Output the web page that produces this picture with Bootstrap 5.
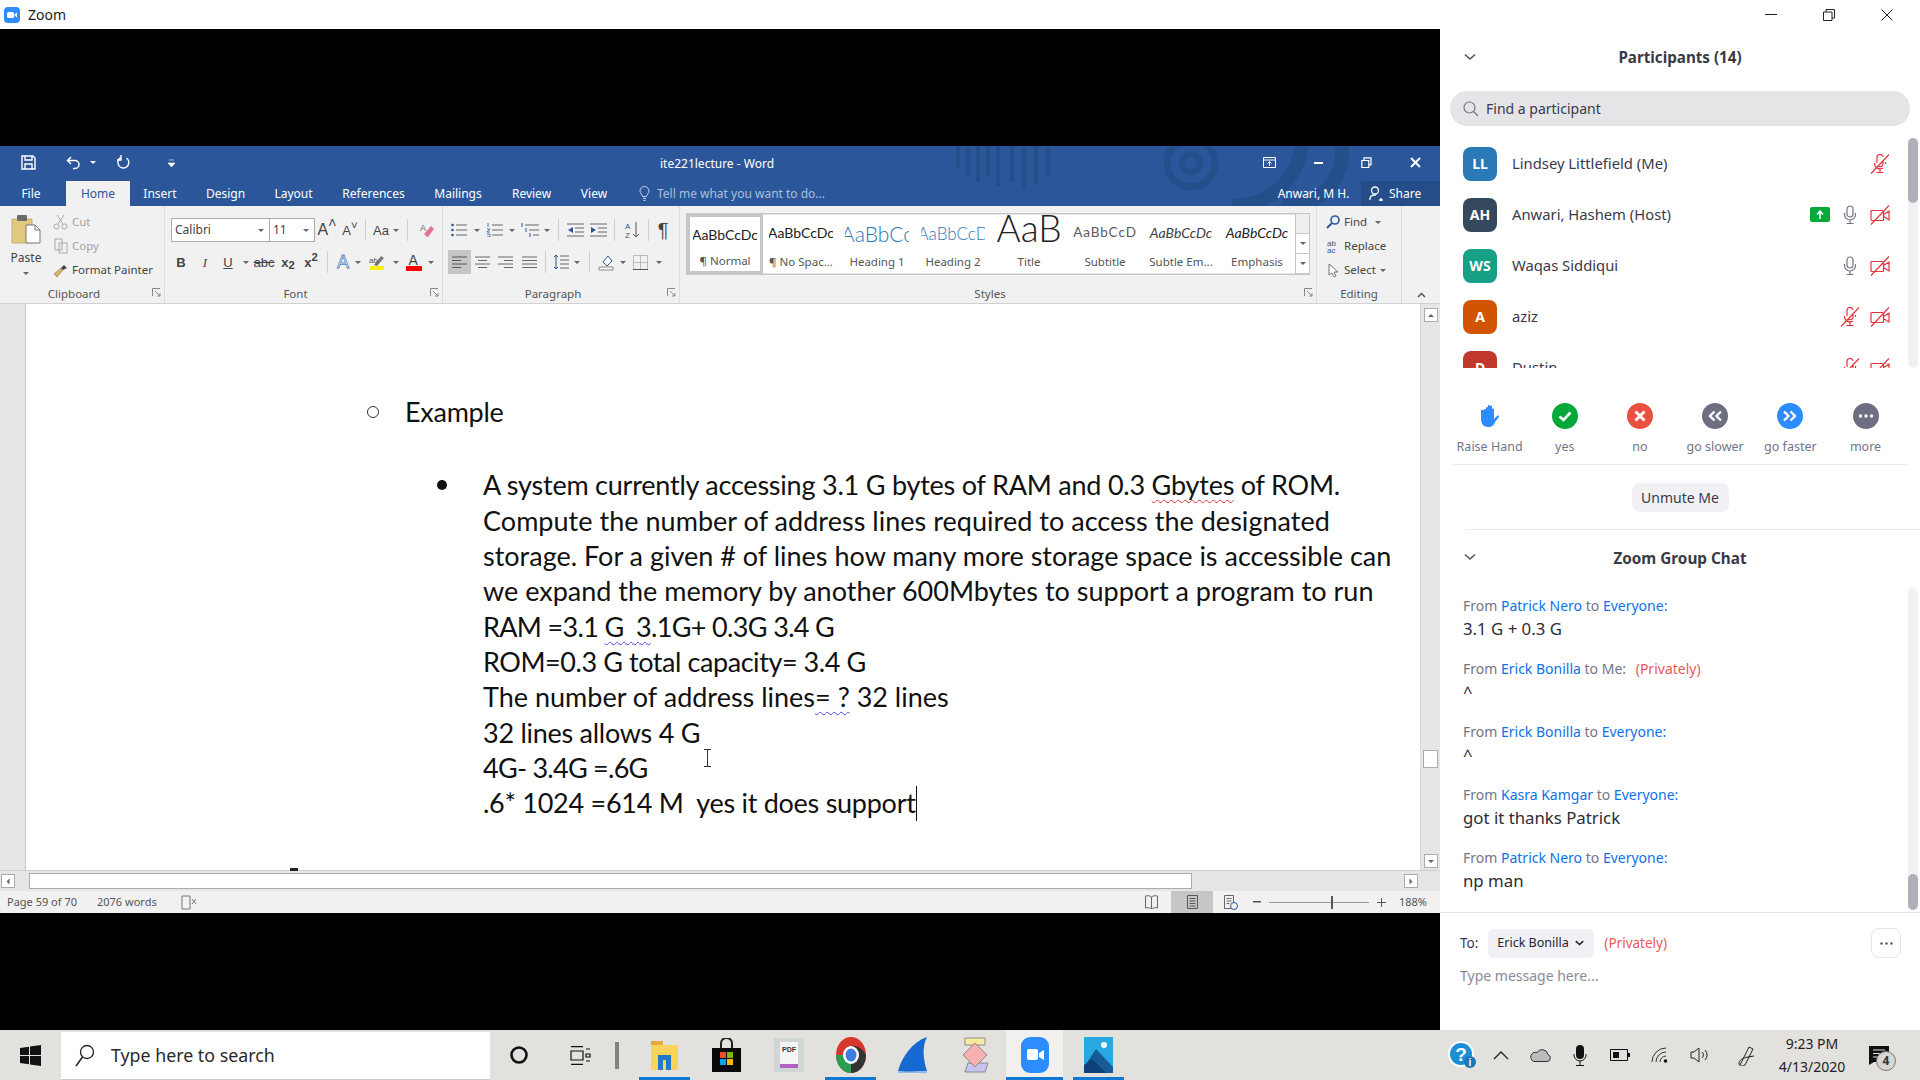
<!DOCTYPE html>
<html lang="en"><head><meta charset="utf-8"><title>Zoom</title>
<link href="https://cdn.jsdelivr.net/npm/bootstrap@5.3.0/dist/css/bootstrap.min.css" rel="stylesheet">
<style>
html,body{margin:0;width:1920px;height:1080px;overflow:hidden;background:#000;font-family:"Noto Sans",sans-serif}
svg{display:block;flex:none}
.shell{height:1030px}
.leftcol{width:1440px}
.apptitle{height:29px;background:#fff;padding-left:4px;gap:8px;font-size:14px;color:#222}
.blk{height:117px;background:#000}
.word{height:767px;background:#f1f1f1;overflow:hidden}
.wdhead{height:60px;background:#2b579a;position:relative;color:#fff;font-size:12px}
.deco{position:absolute;left:942px;top:0}
.wdtitle{height:33px;display:grid;grid-template-columns:56px 34px 6px 54px 42px 1050px 54px 44px 52px 46px;align-items:center;justify-items:center;position:relative}
.wdtitle>div.ttl{padding-top:3px}
.wdtabs{height:25px;margin-top:2px;display:grid;grid-template-columns:66px 64px 60px 71px 65px 95px 74px 73px 52px 659px 82px 79px;align-items:center;justify-items:center;position:relative}
.wdtabs>div{white-space:nowrap}
.filet{padding-right:4px}
.anw{padding-right:13px}
.tabon{background:#f1f1f1;color:#2b579a;justify-self:stretch;height:25px;line-height:25px;text-align:center}
.tell{justify-self:start;padding-left:19px;color:#a9bfdd;gap:7px}
.sharebox{justify-self:stretch;height:25px;background:#254d8a;gap:6px;padding-left:8px}
.ribbon{height:98px;background:#f1f1f1;border-bottom:1px solid #d2d2d2;color:#444;font-size:11.5px;line-height:1}
.grp{height:97px;border-right:1px solid #dcdcdc;margin-top:0;padding-top:4px;flex:none;display:flex;flex-direction:column}
.grpbody{height:72px}
.g1{width:165px}.g2{width:278px}.g3{width:237px}.g4{width:637px}.g5{width:85px}
.lbl{height:21px;color:#555;font-size:11.5px;padding-top:6px}
.lbl>span{flex:1;text-align:center}
.launch{width:16px;padding-left:4px}
.pastecol{width:52px;font-size:12px;padding-top:4px}
.cliprow{height:24px;gap:3px}
.dis{color:#a2a2a2}
.fontbody{padding:8px 0 0 6px}
.rw{display:grid;height:24px;align-items:center;justify-items:center}
.rw+.rw{margin-top:8px}
.f1{grid-template-columns:99px 45px 24px 22px 8px 34px 9px 30px}
.f2{grid-template-columns:20px 28px 18px 18px 18px 30px 16px 16px 16px 14px 24px 14px 22px 12px}
.p1{grid-template-columns:22px 14px 22px 12px 24px 10px 12px 22px 24px 8px 28px 4px 26px}
.p2{grid-template-columns:23px 22px 24px 24px 8px 24px 8px 16px 18px 16px 18px 20px}
.parabody{padding:8px 0 0 5px}
.combo{justify-self:stretch;height:24px;background:#fff;border:1px solid #ababab;padding:0 5px 0 3px;font-size:12px;color:#444;justify-content:space-between;display:flex;align-items:center}
.combo+.combo{border-left:0}
.vs{width:1px;height:22px;background:#d0d0d0}
.cr{width:0;height:0;border-left:3px solid transparent;border-right:3px solid transparent;border-top:3px solid #666;flex:none}
.crw{border-top-color:#fff}
.gl{font-family:"Liberation Sans",sans-serif;font-size:13px;color:#444;line-height:1}
.hlon{background:#c6c6c6;justify-self:stretch;align-self:stretch;display:flex;align-items:center;justify-content:center}
.statact{width:42px;height:22px}
.gallery{margin:3px 0 0 6px;width:624px;height:62px;background:#fff;border:1px solid #c6c6c6;box-shadow:0 0 0 1px #e2e2e2 inset}
.sty{width:76px;height:60px;overflow:hidden;flex:none;text-align:center;color:#444;white-space:nowrap}
.sty.sel{border:3px solid #c6c6c6}
.sprev{height:38px;display:flex;align-items:center;justify-content:center;font-family:Lato,sans-serif;color:#222;font-size:14px;overflow:hidden;width:64px;margin:0 auto}
.slab{height:22px;font-size:11.5px;line-height:20px;color:#555}
.sel .sprev{height:35px}.sel .slab{height:19px;line-height:18px}
.h1s{font-size:21px!important;color:#2e74b5!important;font-weight:300}
.h2s{font-size:17px!important;color:#2e74b5!important;font-weight:300}
.tts{font-size:37px!important;font-weight:300;align-items:flex-start;line-height:27px}
.sbs{color:#5a5a5a!important;letter-spacing:.9px;font-size:13.5px!important}
.ses{font-style:italic;color:#404040!important}
.ems{font-style:italic;color:#222!important}
.gscroll{width:14px;margin-left:auto;border-left:1px solid #c6c6c6}
.gscroll>div{flex:1;border-bottom:1px solid #c6c6c6;background:#fff}
.gscroll>div:first-child{background:#efefef}
.editrow{height:24px;padding-left:9px;gap:4px;white-space:nowrap}
.collapse-sl{flex:1;display:flex;justify-content:center;align-items:flex-end;padding-bottom:2px;height:94px}
.docwrap{height:566px}
.strip{width:26px;background:#e6e6e6;border-right:1px solid #c6c6c6}
.page{flex:1;background:#fff;position:relative;padding:90px 0 0 0;font-family:Lato,sans-serif;font-size:27px;letter-spacing:-.27px;line-height:35.35px;color:#111}
.ln{white-space:pre}
.sp1{letter-spacing:-.22px}.sp2{letter-spacing:.03px}.sp3{letter-spacing:0}.sp5{letter-spacing:-.66px}.sp6{letter-spacing:-.43px}.sp9{letter-spacing:-.73px}
.ex{padding-left:341px}
.ex i{display:inline-block;width:12px;height:12px;border:1.6px solid #333;border-radius:50%}
.exl{padding-left:26px}
.para{margin-top:38px;padding-left:411px}
.dot{width:10px;height:10px;background:#111;border-radius:50%;margin-top:13px;margin-right:36px;flex:none}
.wv{text-decoration:underline wavy #d83a3a 1px;text-underline-offset:4px}
.wb{text-decoration:underline wavy #4a4ad8 1px;text-underline-offset:4px}
.caret{display:inline-block;width:1px;height:35px;background:#111;vertical-align:-8px}
.ibeam{position:absolute;left:677px;top:445px}
.pgmark{position:absolute;left:264px;bottom:-1px;width:8px;height:3px;background:#222}
.vsb{width:20px;background:#e6e6e6;padding:4px 0 2px;border-left:1px solid #d8d8d8}
.vthumb{width:15px;height:18px;background:#fff;border:1px solid #ababab;margin-top:428px;margin-bottom:auto}
.arr{width:14px;height:14px;border:1px solid #ababab;background:#fff}
.up{transform:rotate(180deg)}.lf{transform:rotate(90deg)}.rt{transform:rotate(-90deg)}
.hsb{height:21px;background:#e6e6e6;border-top:1px solid #cfcfcf;padding:2px 22px 2px 1px}
.hthumb{width:1163px;height:16px;background:#fff;border:1px solid #ababab;margin-left:14px}
.stat{height:22px;background:#f1f1f1;font-size:11px;color:#555;padding-left:7px;white-space:nowrap}
.statsl{display:grid;grid-template-columns:40px 42px 36px 16px 108px 16px 48px;align-items:center;justify-items:center;height:22px;margin-left:auto;padding-right:3px}
.zoomtr{position:relative;width:100px;height:1px;background:#999}
.zoomtr i{position:absolute;left:62px;top:-6px;width:2px;height:13px;background:#555}
.panel{width:480px;background:#fff;color:#232333;font-size:14px}
.pctl{height:29px;display:grid;padding-left:302px;grid-template-columns:58px 58px 58px;justify-items:center;align-items:center}
.phead{height:62px;padding-bottom:5px;position:relative;font-weight:700;font-size:15.2px;color:#3a3a47}
.chev{position:absolute;left:24px;top:50%;margin-top:-7px}
.chatt .chev{margin-top:-5px}
.psearch{height:35px;margin:0 10px;background:#e5e5e8;border-radius:17px;padding-left:13px;gap:7px;color:#39394a}
.plist{height:230px;margin-top:12px;overflow:hidden;position:relative}
.prow{height:51px;padding-left:23px;flex:none}
.av{width:34px;height:34px;border-radius:8px;color:#fff;font-weight:700;font-size:14px;margin-right:15px;flex:none}
.c1{background:#2a7ab8}.c2{background:#34495e}.c3{background:#16a085}.c4{background:#d35400}.c5{background:#c0392b}
.pname{flex:1;color:#39394a;white-space:nowrap;font-size:14.8px}
.pic{width:30px;justify-content:center;display:flex;flex:none;color:#747487}
.pics{margin-right:25px}
.shr{width:20px;height:15px;background:#06a83a;border-radius:2px;margin-right:5px;flex:none}
.psb{position:absolute;right:2px;top:0;width:10px;height:230px;background:#f1f1f5;border-radius:5px}
.psb i{display:block;height:65px;width:100%;background:#b0b0ba;border-radius:5px}
.react{display:grid;grid-template-columns:repeat(6,75.200px);padding:35px 0 0 12px;font-size:12.5px;color:#747487;height:96px;justify-items:center;align-content:start}
.react>div{display:flex;flex-direction:column;align-items:center;gap:9px;white-space:nowrap}
.hr1{height:1px;background:#ececf0;margin:0 13px}
.umwrap{height:64px}
.umbtn{background:#f1f1f5;border:0;border-radius:8px;height:29px;width:97px;padding:0;font-size:14px;color:#39394a}
.hr2{height:1px;background:#ececf0;margin-left:25px}
.chatt{height:56px;position:relative;font-weight:700;font-size:15.300px;color:#3a3a47}
.chatwrap{height:326px;position:relative;padding:9px 0 0 23px}
.msg{height:63px;white-space:nowrap}
.mf{height:22px;line-height:22px;font-size:14px;color:#747487}
.mf b{font-weight:400;color:#0e71eb}
.mf em{font-style:normal;color:#e8595a;margin-left:6px}
.mb{height:24px;line-height:24px;font-size:16.8px;color:#2c2c38}
.csb{position:absolute;right:2px;top:2px;height:322px;width:10px;background:#f1f1f5;border-radius:5px;display:flex;align-items:flex-end}
.csb i{display:block;width:100%;height:36px;background:#b0b0ba;border-radius:5px}
.hr3{height:1px;background:#e4e4e8}
.torow{height:60px;padding:0 19px 0 20px;font-size:13.5px;gap:10px;color:#39394a}
.tobtn{background:#f1f1f5;border:0;border-radius:6px;height:29px;width:106px;font-size:12.5px;padding:0 0 0 9px;color:#232333;gap:6px;white-space:nowrap}
.topriv{color:#e8595a}
.morebtn{width:30px;height:30px;border:1px solid #e4e4ea;border-radius:8px;margin-left:auto;background:#fff;padding:0}
.ph{padding-left:20px;color:#8a8a98;font-size:14px;line-height:18px;margin-top:-6px}
.tbar{height:50px;background:#e3e1de;position:relative;color:#111}
.wincell{width:61px}
.tsearch{width:429px;height:48px;margin-top:2px;background:#fff;padding-left:14px;gap:16px;font-size:17.8px;color:#2a2a2a;flex:none;border-bottom:1px solid #ccc}
.tsl{flex:none;height:50px}
.t58{width:58px}.t64{width:64px}.t10{width:10px}
.apps{gap:11px;margin-left:17px;height:50px}
.app{width:51px;height:50px;border-bottom:3px solid #0f78d4;padding-top:3px}
.app.pl{border-bottom-color:transparent}
.app.zz{width:57px;margin:0 -1px 0 -5px;background:#f1f0ee}
.tray{display:grid;grid-template-columns:40px 38px 40px 39px 41px 40px 40px 50px 84px 50px;margin-left:auto;margin-right:16px;align-items:center;justify-items:center;height:50px}
.clock{font-size:14px;line-height:23px;text-align:center;white-space:nowrap;color:#222}
.notif{position:relative}
.nbadge{position:absolute;right:-7px;bottom:-6px;width:20px;height:20px;border-radius:50%;background:#d6d5d3;border:1px solid #777;font-size:12px;font-weight:700;color:#333;display:flex;align-items:center;justify-content:center}
.ser{font-family:"Liberation Serif",serif}
</style></head>
<body>
<svg width="0" height="0" class="position-absolute"><defs>
<symbol id="mic" viewBox="0 0 20 20"><g fill="none" stroke="currentColor" stroke-width="1.2"><rect x="7" y="1" width="6" height="11" rx="3"/><path d="M4.5 8v1.5a5.5 5.5 0 0 0 11 0V8M10 15v3.5M6.500 18.500h7"/></g></symbol>
<symbol id="micoff" viewBox="0 0 20 20"><g fill="none" stroke="#e5343d" stroke-width="1.2"><path d="M7 9V4a3 3 0 0 1 6-1M13 7v3a3 3 0 0 1-4.500 2.300M4.500 9a5.500 5.500 0 0 0 8.500 5M15.500 8v2M10 15.500v3M6.500 18.500h7M1 19.500 19 .5"/></g></symbol>
<symbol id="vidoff" viewBox="0 0 20 20"><g fill="none" stroke="#e5343d" stroke-width="1.2"><path d="M13 5.500H2a1 1 0 0 0-1 1v8a1 1 0 0 0 1 1h11.500M13.500 9.500l5.500-3.500v9l-5.500-3.500zM13.500 5.500v10M1 19.500 19 .5"/></g></symbol>
<symbol id="chv" viewBox="0 0 12 8"><path d="M1 1.500 6 6l5-4.500" fill="none" stroke="#555" stroke-width="1.600"/></symbol>
<symbol id="lnch" viewBox="0 0 9 9"><path d="M.5 8V.5H8M3 3l5 5M5 8h3V5" fill="none" stroke="#888"/></symbol>
</defs></svg>

<div class="shell d-flex">
 <div class="leftcol d-flex flex-column">
  <div class="apptitle d-flex align-items-center">
   <svg width="16" height="16" viewBox="0 0 16 16"><rect width="16" height="16" rx="4" fill="#2d8cff"/><rect x="3" y="5" width="7" height="6" rx="1.500" fill="#fff"/><path d="M10.500 7.500 13 5.500v5l-2.500-2z" fill="#fff"/></svg>
   <span>Zoom</span>
  </div>
  <div class="blk"></div>
  <div class="word d-flex flex-column">
   <div class="wdhead">
    <svg class="deco" width="500" height="60" viewBox="0 0 500 60"><g fill="none" stroke="#21497f" stroke-opacity=".55"><path d="M16 0v22M26 0v30M36 0v36M46 0v30M56 0v40M70 0v36M82 0v44M94 0v38M106 0v30" stroke-width="4"/><circle cx="249" cy="17" r="9" stroke-width="6"/><circle cx="249" cy="17" r="24" stroke-width="7"/><path d="M290 60A70 70 0 0 0 360 0M340 60A55 55 0 0 0 400 0" stroke-width="14"/></g></svg>
    <div class="wdtitle">
     <svg width="15" height="15" viewBox="0 0 15 15"><path d="M1 1h11l2 2v11H1zM4 1v4h7V1M4 14V9h7v5" fill="none" stroke="#fff" stroke-width="1.400"/></svg>
     <svg width="15" height="14" viewBox="0 0 15 14"><path d="M5 1 1.500 4.500 5 8M2 4.500h7a4 4 0 0 1 0 8H7" fill="none" stroke="#fff" stroke-width="1.500"/></svg>
     <div class="cr crw"></div>
     <svg width="15" height="15" viewBox="0 0 15 15"><path d="M5 2.500A5.500 5.500 0 1 0 10.500 3M5 0v5H1" fill="none" stroke="#fff" stroke-width="1.400"/></svg>
     <svg width="7" height="8" viewBox="0 0 7 8"><path d="M1 1h5M0 4h7L3.500 8z" fill="#fff" stroke="#fff" stroke-width=".6"/></svg>
     <div class="ttl">ite221lecture - Word</div>
     <svg width="13" height="11" viewBox="0 0 13 11"><path d="M.5.500h12v10H.5zM.5 3h12M6.500 9V4.500M4.500 6.500l2-2 2 2" fill="none" stroke="#fff"/></svg>
     <svg width="9" height="2" viewBox="0 0 9 2"><rect width="9" height="2" fill="#fff"/></svg>
     <svg width="11" height="11" viewBox="0 0 11 11"><path d="M.8 3.500h7v7h-7zM3 3.500V.8h7v7H8" fill="none" stroke="#fff" stroke-width="1.200"/></svg>
     <svg width="11" height="11" viewBox="0 0 11 11"><path d="M1 1l9 9M10 1l-9 9" stroke="#fff" stroke-width="2"/></svg>
    </div>
    <div class="wdtabs">
     <div class="filet">File</div><div class="tabon">Home</div><div>Insert</div><div>Design</div><div>Layout</div><div>References</div><div>Mailings</div><div>Review</div><div>View</div>
     <div class="tell d-flex align-items-center"><svg width="11" height="15" viewBox="0 0 11 15"><path d="M3.500 10.500C3.500 8.500 1 7.500 1 5a4.500 4.500 0 0 1 9 0c0 2.500-2.500 3.500-2.500 5.500zM4 12.500h3M4.500 14.500h2" fill="none" stroke="#c3d3e8"/></svg><span>Tell me what you want to do...</span></div>
     <div class="anw">Anwari, M H.</div>
     <div class="sharebox d-flex align-items-center"><svg width="14" height="15" viewBox="0 0 14 15"><circle cx="6" cy="4.500" r="3.500" fill="none" stroke="#fff" stroke-width="1.300"/><path d="M.8 14c0-3 2-5 5-5h1M10 14h4M12 12v4" fill="none" stroke="#fff" stroke-width="1.300"/></svg><span>Share</span></div>
    </div>
   </div>

   <div class="ribbon d-flex">
    <div class="grp g1">
     <div class="grpbody d-flex">
      <div class="pastecol d-flex flex-column align-items-center">
       <svg width="30" height="30" viewBox="0 0 30 30"><path d="M1 5h20v24H1z" fill="#e3c97e" stroke="#b8a468" stroke-width=".8"/><rect x="6" y="1" width="10" height="6" rx="1" fill="#6c6c6c"/><path d="M15 11h9l5 5v13H15z" fill="#fff" stroke="#777"/><path d="M24 11v5h5" fill="none" stroke="#777"/></svg>
       <span class="mt-2">Paste</span><div class="cr mt-2"></div>
      </div>
      <div>
       <div class="cliprow d-flex align-items-center dis"><svg width="17" height="16" viewBox="0 0 17 16"><path d="M5 1l6 9M12 1l-6 9" stroke="#a8a8a8" fill="none"/><circle cx="4.500" cy="12.500" r="2.500" fill="none" stroke="#a8a8a8"/><circle cx="12.500" cy="12.500" r="2.500" fill="none" stroke="#a8a8a8"/></svg><span>Cut</span></div>
       <div class="cliprow d-flex align-items-center dis"><svg width="17" height="16" viewBox="0 0 17 16"><path d="M3 1h7v11H3zM7 5h8v10H7z" fill="#f1f1f1" stroke="#a8a8a8"/></svg><span>Copy</span></div>
       <div class="cliprow d-flex align-items-center"><svg width="17" height="16" viewBox="0 0 17 16"><path d="M9 6 2 12l3 3 6-7z" fill="#d7b56d" stroke="#8c7a4a" stroke-width=".7"/><path d="M9 6l3-3 3 3-4 2z" fill="#444"/></svg><span>Format Painter</span></div>
      </div>
     </div>
     <div class="lbl d-flex"><span>Clipboard</span><div class="launch"><svg width="9" height="9"><use href="#lnch"/></svg></div></div>
    </div>

    <div class="grp g2">
     <div class="grpbody fontbody">
      <div class="rw f1">
       <div class="combo"><span>Calibri</span><div class="cr"></div></div>
       <div class="combo"><span>11</span><div class="cr"></div></div>
       <div class="gl fs-6">A<sup class="small">˄</sup></div>
       <div class="gl">A<sup class="small">˅</sup></div>
       <div class="vs"></div>
       <div class="d-flex align-items-center gap-1 gl">Aa<div class="cr"></div></div>
       <div class="vs"></div>
       <svg width="16" height="16" viewBox="0 0 16 16"><path d="M8 15l-3-3 7-8 3 3-6 8z" fill="#e2758d"/><text x="1" y="9" font-size="9" fill="#666" font-family="Liberation Sans">A</text></svg>
      </div>
      <div class="rw f2">
       <div class="gl fw-bold">B</div><div class="gl fst-italic ser">I</div><div class="gl text-decoration-underline">U</div><div class="cr"></div>
       <div class="gl small text-decoration-line-through">abc</div><div class="gl fw-bold">x<sub class="small">2</sub></div><div class="gl fw-bold">x<sup class="small">2</sup></div><div class="vs"></div>
       <svg width="16" height="18" viewBox="0 0 16 18"><text x="8" y="15" font-size="18" text-anchor="middle" fill="#fff" stroke="#5b86c5" stroke-width=".8" font-family="Liberation Sans">A</text></svg><div class="cr"></div>
       <svg width="18" height="16" viewBox="0 0 18 16"><path d="M2 12h14v4H2z" fill="#f7f20b"/><path d="M6 11l7-9 3 2-7 8z" fill="#777"/><text x="1" y="9" font-size="8" fill="#555" font-family="Liberation Sans">ab</text></svg>
       <div class="cr"></div>
       <svg width="18" height="18" viewBox="0 0 18 18"><path d="M1 13h16v5H1z" fill="#f00"/><text x="3.500" y="12" font-size="14" fill="#444" font-family="Liberation Sans">A</text></svg>
       <div class="cr"></div>
      </div>
     </div>
     <div class="lbl d-flex"><span>Font</span><div class="launch"><svg width="9" height="9"><use href="#lnch"/></svg></div></div>
    </div>

    <div class="grp g3">
     <div class="grpbody parabody">
      <div class="rw p1">
       <svg width="16" height="14" viewBox="0 0 16 14"><path d="M5 2h11M5 7h11M5 12h11" stroke="#666"/><circle cx="1.500" cy="2" r="1.300" fill="#2b579a"/><circle cx="1.500" cy="7" r="1.300" fill="#2b579a"/><circle cx="1.500" cy="12" r="1.300" fill="#2b579a"/></svg><div class="cr"></div>
       <svg width="16" height="14" viewBox="0 0 16 14"><path d="M5 2h11M5 7h11M5 12h11" stroke="#666"/><path d="M1 0v4M0 6h3L0 9h3M0 11h3v3H0" stroke="#2b579a" fill="none" stroke-width=".8"/></svg><div class="cr"></div>
       <svg width="18" height="14" viewBox="0 0 18 14"><path d="M4 2h14M8 7h10M12 12h6" stroke="#666"/><path d="M1 0v4M5 5v4M9 10v4" stroke="#2b579a"/></svg><div class="cr"></div>
       <div class="vs"></div>
       <svg width="17" height="14" viewBox="0 0 17 14"><path d="M0 1h17M8 5h9M8 9h9M0 13h17" stroke="#666"/><path d="M6 4 1 7l5 3zM3 7h3" fill="#2b579a"/></svg>
       <svg width="17" height="14" viewBox="0 0 17 14"><path d="M0 1h17M8 5h9M8 9h9M0 13h17" stroke="#666"/><path d="M1 4l5 3-5 3z" fill="#2b579a"/></svg>
       <div class="vs"></div>
       <svg width="15" height="18" viewBox="0 0 15 18"><path d="M11 1v15M8 13l3 3 3-3" stroke="#555" fill="none"/><text x="0" y="8" font-size="8" fill="#2b579a" font-family="Liberation Sans">A</text><text x="0" y="17" font-size="8" fill="#555" font-family="Liberation Sans">Z</text></svg>
       <div class="vs"></div>
       <div class="gl fs-5">¶</div>
      </div>
      <div class="rw p2">
       <div class="hlon"><svg width="15" height="12" viewBox="0 0 15 12"><path d="M0 1h15M0 4.500h9M0 8h15M0 11.500h9" stroke="#555"/></svg></div>
       <svg width="15" height="12" viewBox="0 0 15 12"><path d="M0 1h15M3 4.500h9M0 8h15M3 11.500h9" stroke="#666"/></svg>
       <svg width="15" height="12" viewBox="0 0 15 12"><path d="M0 1h15M6 4.500h9M0 8h15M6 11.500h9" stroke="#666"/></svg>
       <svg width="15" height="12" viewBox="0 0 15 12"><path d="M0 1h15M0 4.500h15M0 8h15M0 11.500h15" stroke="#666"/></svg>
       <div class="vs"></div>
       <svg width="16" height="16" viewBox="0 0 16 16"><path d="M7 2h9M7 6h9M7 10h9M7 14h9" stroke="#666"/><path d="M3 1v14M1 3l2-2 2 2M1 13l2 2 2-2" stroke="#2b579a" fill="none"/></svg>
       <div class="cr"></div><div class="vs"></div>
       <svg width="17" height="17" viewBox="0 0 17 17"><path d="M1 13h14v3H1z" fill="#fff" stroke="#888"/><path d="M5 8l5-6 4 5-5 5z" fill="#fff" stroke="#2b579a"/></svg>
       <div class="cr"></div>
       <svg width="15" height="15" viewBox="0 0 15 15"><path d="M.5.500h14v14H.5zM.5 7.500h14M7.500.500v14" fill="none" stroke="#888" stroke-dasharray="1 1"/><path d="M0 14.500h15" stroke="#555"/></svg>
       <div class="cr"></div>
      </div>
     </div>
     <div class="lbl d-flex"><span>Paragraph</span><div class="launch"><svg width="9" height="9"><use href="#lnch"/></svg></div></div>
    </div>

    <div class="grp g4">
     <div class="grpbody">
      <div class="gallery d-flex">
       <div class="sty sel"><div class="sprev">AaBbCcDc</div><div class="slab">¶ Normal</div></div>
       <div class="sty"><div class="sprev">AaBbCcDc</div><div class="slab">¶ No Spac...</div></div>
       <div class="sty"><div class="sprev h1s">AaBbCc</div><div class="slab">Heading 1</div></div>
       <div class="sty"><div class="sprev h2s">AaBbCcD</div><div class="slab">Heading 2</div></div>
       <div class="sty"><div class="sprev tts">AaB</div><div class="slab">Title</div></div>
       <div class="sty"><div class="sprev sbs">AaBbCcD</div><div class="slab">Subtitle</div></div>
       <div class="sty"><div class="sprev ses">AaBbCcDc</div><div class="slab">Subtle Em...</div></div>
       <div class="sty"><div class="sprev ems">AaBbCcDc</div><div class="slab">Emphasis</div></div>
       <div class="gscroll d-flex flex-column"><div></div><div class="d-flex align-items-center justify-content-center"><div class="cr"></div></div><div class="d-flex align-items-center justify-content-center"><div class="cr"></div></div></div>
      </div>
     </div>
     <div class="lbl d-flex"><span>Styles</span><div class="launch"><svg width="9" height="9"><use href="#lnch"/></svg></div></div>
    </div>

    <div class="grp g5">
     <div class="grpbody">
      <div class="editrow d-flex align-items-center"><svg width="14" height="14" viewBox="0 0 14 14"><circle cx="9" cy="5" r="4" fill="none" stroke="#2b579a" stroke-width="1.600"/><path d="M6 8l-5 5" stroke="#2b579a" stroke-width="2"/></svg><span>Find</span><div class="cr ms-1"></div></div>
      <div class="editrow d-flex align-items-center"><svg width="14" height="14" viewBox="0 0 14 14"><text x="1" y="6.500" font-size="8" fill="#555" font-family="Liberation Sans">ab</text><text x="1" y="13.500" font-size="8" fill="#2b579a" font-family="Liberation Sans">ac</text></svg><span>Replace</span></div>
      <div class="editrow d-flex align-items-center"><svg width="14" height="15" viewBox="0 0 14 15"><path d="M3 1v11l3-2 2 4 2-1-2-4h4z" fill="#fff" stroke="#777"/></svg><span>Select</span><div class="cr"></div></div>
     </div>
     <div class="lbl d-flex"><span>Editing</span></div>
    </div>
    <div class="collapse-sl"><svg width="9" height="6" viewBox="0 0 9 6"><path d="M1 5l3.500-3.500L8 5" fill="none" stroke="#555" stroke-width="1.500"/></svg></div>
   </div>

   <div class="docwrap d-flex">
    <div class="strip"></div>
    <div class="page">
     <div class="ex d-flex align-items-center"><i></i><span class="exl">Example</span></div>
     <div class="para d-flex">
      <div class="dot"></div>
      <div>
       <div class="ln sp1">A system currently accessing 3.1 G bytes of RAM and 0.3 <span class="wv">Gbytes</span> of ROM.</div>
       <div class="ln sp2">Compute the number of address lines required to access the designated</div>
       <div class="ln sp3">storage. For a given # of lines how many more storage space is accessible can</div>
       <div class="ln sp3">we expand the memory by another 600Mbytes to support a program to run</div>
       <div class="ln sp5">RAM =3.1 <span class="wb">G  3</span>.1G+ 0.3G 3.4 G</div>
       <div class="ln sp6">ROM=0.3 G total capacity= 3.4 G</div>
       <div class="ln sp3">The number of address lines<span class="wb">= ?</span> 32 lines</div>
       <div class="ln">32 lines allows 4 G</div>
       <div class="ln sp9">4G- 3.4G =.6G</div>
       <div class="ln">.6* 1024 =614 M  yes it does support<span class="caret"></span></div>
      </div>
     </div>
     <svg class="ibeam" width="9" height="18" viewBox="0 0 9 18"><path d="M1 .500h7M1 17.500h7M4.500 1v16" stroke="#333" fill="none"/></svg>
     <div class="pgmark"></div>
    </div>
    <div class="vsb d-flex flex-column align-items-center">
     <div class="arr d-flex align-items-center justify-content-center"><div class="cr up"></div></div>
     <div class="vthumb"></div>
     <div class="arr d-flex align-items-center justify-content-center"><div class="cr"></div></div>
    </div>
   </div>
   <div class="hsb d-flex align-items-center">
    <div class="arr d-flex align-items-center justify-content-center"><div class="cr lf"></div></div>
    <div class="hthumb"></div>
    <div class="arr ms-auto d-flex align-items-center justify-content-center"><div class="cr rt"></div></div>
   </div>
   <div class="stat d-flex align-items-center">
    <span>Page 59 of 70</span><span class="ms-3 ps-1">2076 words</span>
    <svg class="ms-4" width="16" height="15" viewBox="0 0 16 15"><path d="M1 1h8v13H1z" fill="none" stroke="#777"/><path d="M11 4l4 5M15 4l-4 5" stroke="#777"/></svg>
    <div class="statsl">
     <svg width="13" height="14" viewBox="0 0 13 14"><path d="M6.500 2C5 .5 2 .5.500 1v12c1.500-.5 4.500-.5 6 1 1.500-1.500 4.500-1.500 6-1V1c-1.500-.5-4.500-.5-6 1zM6.500 2v12" fill="none" stroke="#666"/></svg>
     <div class="hlon statact"><svg width="11" height="14" viewBox="0 0 11 14"><path d="M.5.500h10v13H.5zM2.500 3.500h6M2.500 6h6M2.500 8.500h6M2.500 11h6" fill="none" stroke="#555"/></svg></div>
     <svg width="14" height="15" viewBox="0 0 14 15"><path d="M.5.500h9v13H.5zM2.500 3.500h5M2.500 6h5M2.500 8.500h3" fill="none" stroke="#666"/><circle cx="10" cy="11" r="3.500" fill="#f1f1f1" stroke="#2b579a"/></svg>
     <svg width="8" height="2" viewBox="0 0 8 2"><rect width="8" height="1.500" fill="#555"/></svg>
     <div class="zoomtr"><i></i></div>
     <svg width="9" height="9" viewBox="0 0 9 9"><path d="M0 4.500h9M4.500 0v9" stroke="#555"/></svg>
     <span>188%</span>
    </div>
   </div>
  </div>
  <div class="blk"></div>
 </div>

 <div class="panel d-flex flex-column">
  <div class="pctl">
   <svg width="12" height="2" viewBox="0 0 12 2"><rect width="12" height="1" fill="#222"/></svg>
   <svg width="12" height="12" viewBox="0 0 12 12"><path d="M.5 3h8.500v8.500H.5zM3 3V.5h8.500V9H9" fill="none" stroke="#222"/></svg>
   <svg width="12" height="12" viewBox="0 0 12 12"><path d="M.5.500l11 11M11.500.500l-11 11" stroke="#222"/></svg>
  </div>
  <div class="phead d-flex align-items-center justify-content-center"><svg class="chev" width="12" height="8"><use href="#chv"/></svg>Participants (14)</div>
  <div class="psearch d-flex align-items-center"><svg width="16" height="16" viewBox="0 0 16 16"><circle cx="6.500" cy="6.500" r="5.500" fill="none" stroke="#747487" stroke-width="1.200"/><path d="M10.500 10.500 15 15" stroke="#747487" stroke-width="1.200"/></svg><span>Find a participant</span></div>
  <div class="plist">
   <div class="prow d-flex align-items-center"><div class="av c1 d-flex align-items-center justify-content-center">LL</div><div class="pname">Lindsey Littlefield (Me)</div><div class="pics d-flex align-items-center"><span class="pic"><svg width="20" height="20"><use href="#micoff"/></svg></span></div></div>
   <div class="prow d-flex align-items-center"><div class="av c2 d-flex align-items-center justify-content-center">AH</div><div class="pname">Anwari, Hashem (Host)</div><div class="pics d-flex align-items-center"><div class="shr d-flex align-items-center justify-content-center"><svg width="8" height="9" viewBox="0 0 8 9"><path d="M4 9V2M1 4.500 4 1l3 3.500" fill="none" stroke="#fff" stroke-width="1.500"/></svg></div><span class="pic"><svg width="20" height="20"><use href="#mic"/></svg></span><span class="pic"><svg width="20" height="20"><use href="#vidoff"/></svg></span></div></div>
   <div class="prow d-flex align-items-center"><div class="av c3 d-flex align-items-center justify-content-center">WS</div><div class="pname">Waqas Siddiqui</div><div class="pics d-flex align-items-center"><span class="pic"><svg width="20" height="20"><use href="#mic"/></svg></span><span class="pic"><svg width="20" height="20"><use href="#vidoff"/></svg></span></div></div>
   <div class="prow d-flex align-items-center"><div class="av c4 d-flex align-items-center justify-content-center">A</div><div class="pname">aziz</div><div class="pics d-flex align-items-center"><span class="pic"><svg width="20" height="20"><use href="#micoff"/></svg></span><span class="pic"><svg width="20" height="20"><use href="#vidoff"/></svg></span></div></div>
   <div class="prow d-flex align-items-center"><div class="av c5 d-flex align-items-center justify-content-center">D</div><div class="pname">Dustin</div><div class="pics d-flex align-items-center"><span class="pic"><svg width="20" height="20"><use href="#micoff"/></svg></span><span class="pic"><svg width="20" height="20"><use href="#vidoff"/></svg></span></div></div>
   <div class="psb"><i></i></div>
  </div>
  <div class="react">
   <div><svg width="26" height="26" viewBox="2 0 26 26"><path d="M6 7v9c0 5 3 8 7 8s6-2 7-5l4-5c.5-1-1-2-2-1l-3 3V6.500c0-1.500-2-1.500-2 0V11V3.500c0-1.500-2-1.500-2 0V11V3c0-1.500-2-1.500-2 0v8V5c0-1.500-2-1.500-2 0v6V7c0-1.500-2-1.500-2 0z" fill="#2d8cff"/></svg><span>Raise Hand</span></div>
   <div><svg width="26" height="26" viewBox="0 0 26 26"><circle cx="13" cy="13" r="13" fill="#06a83a"/><path d="M7.500 13.500l4 3.500 7-7.500" fill="none" stroke="#fff" stroke-width="2.600"/></svg><span>yes</span></div>
   <div><svg width="26" height="26" viewBox="0 0 26 26"><circle cx="13" cy="13" r="13" fill="#e8503f"/><path d="M8.500 8.500l9 9M17.500 8.500l-9 9" stroke="#fff" stroke-width="2.800"/></svg><span>no</span></div>
   <div><svg width="26" height="26" viewBox="0 0 26 26"><circle cx="13" cy="13" r="13" fill="#6e6e82"/><path d="M12.500 8.500 8 13l4.500 4.500M19 8.500 14.500 13l4.500 4.500" fill="none" stroke="#fff" stroke-width="2.400"/></svg><span>go slower</span></div>
   <div><svg width="26" height="26" viewBox="0 0 26 26"><circle cx="13" cy="13" r="13" fill="#2d8cff"/><path d="M7 8.500 11.500 13 7 17.500M13.500 8.500 18 13l-4.500 4.500" fill="none" stroke="#fff" stroke-width="2.400"/></svg><span>go faster</span></div>
   <div><svg width="26" height="26" viewBox="0 0 26 26"><circle cx="13" cy="13" r="13" fill="#6e6e82"/><circle cx="7.500" cy="13" r="1.700" fill="#fff"/><circle cx="13" cy="13" r="1.700" fill="#fff"/><circle cx="18.500" cy="13" r="1.700" fill="#fff"/></svg><span>more</span></div>
  </div>
  <div class="hr1"></div>
  <div class="umwrap d-flex align-items-center justify-content-center"><button class="btn umbtn">Unmute Me</button></div>
  <div class="hr2"></div>
  <div class="chatt d-flex align-items-center justify-content-center"><svg class="chev" width="12" height="8"><use href="#chv"/></svg>Zoom Group Chat</div>
  <div class="chatwrap">
   <div class="msg"><div class="mf">From <b>Patrick Nero</b> to <b>Everyone:</b></div><div class="mb">3.1 G + 0.3 G</div></div>
   <div class="msg"><div class="mf">From <b>Erick Bonilla</b> to Me: <em>(Privately)</em></div><div class="mb">^</div></div>
   <div class="msg"><div class="mf">From <b>Erick Bonilla</b> to <b>Everyone:</b></div><div class="mb">^</div></div>
   <div class="msg"><div class="mf">From <b>Kasra Kamgar</b> to <b>Everyone:</b></div><div class="mb">got it thanks Patrick</div></div>
   <div class="msg"><div class="mf">From <b>Patrick Nero</b> to <b>Everyone:</b></div><div class="mb">np man</div></div>
   <div class="csb"><i></i></div>
  </div>
  <div class="hr3"></div>
  <div class="torow d-flex align-items-center"><span>To:</span>
   <button class="btn tobtn d-flex align-items-center">Erick Bonilla<svg width="9" height="6" viewBox="0 0 12 8"><path d="M1 1.500 6 6l5-4.500" fill="none" stroke="#222" stroke-width="2"/></svg></button>
   <span class="topriv">(Privately)</span>
   <button class="btn morebtn d-flex align-items-center justify-content-center"><svg width="13" height="3" viewBox="0 0 13 3"><circle cx="1.500" cy="1.500" r="1.200" fill="#555"/><circle cx="6.500" cy="1.500" r="1.200" fill="#555"/><circle cx="11.500" cy="1.500" r="1.200" fill="#555"/></svg></button>
  </div>
  <div class="ph">Type message here...</div>
 </div>
</div>

<div class="tbar d-flex">
 <div class="wincell tsl d-flex align-items-center justify-content-center"><svg width="21" height="21" viewBox="0 0 21 21"><path d="M0 3l9-1.300V10H0zM10 1.500 21 0v10H10zM0 11h9v8.300L0 18zM10 11h11v10l-11-1.500z" fill="#111"/></svg></div>
 <div class="tsearch d-flex align-items-center"><svg width="20" height="24" viewBox="0 0 20 24"><circle cx="12" cy="8" r="6.500" fill="none" stroke="#222" stroke-width="1.300"/><path d="M7.500 13 1 22" stroke="#222" stroke-width="1.500"/></svg><span>Type here to search</span></div>
 <div class="tsl t58 d-flex align-items-center justify-content-center"><svg width="18" height="18" viewBox="0 0 18 18"><circle cx="9" cy="9" r="7.500" fill="none" stroke="#111" stroke-width="2.600"/></svg></div>
 <div class="tsl t64 d-flex align-items-center justify-content-center"><svg width="21" height="19" viewBox="0 0 21 19"><path d="M1 .700h12M1 18.300h12M1 5h12v9H1zM16 3h4M16 8h4v3h-4zM16 15h4" fill="none" stroke="#111" stroke-width="1.200"/></svg></div>
 <div class="tsl t10 d-flex align-items-center justify-content-center"><svg width="4" height="27" viewBox="0 0 4 27"><path d="M1 0v27M3 0v27" stroke="#222"/></svg></div>
 <div class="apps d-flex">
  <div class="app d-flex justify-content-center align-items-center"><svg width="27" height="30" viewBox="0 0 27 30"><path d="M0 1h12v5H0z" fill="#e8a93c"/><path d="M0 5h27v25H0z" fill="#fbd25a"/><path d="M7 30V15h13v15h-5V20h-3v10z" fill="#1f78c8"/></svg></div>
  <div class="app pl d-flex justify-content-center align-items-center"><svg width="29" height="34" viewBox="0 0 29 34"><path d="M0 10h29v24H0z" fill="#0a0a0a"/><path d="M9 10V5a5.500 5 0 0 1 11 0v5" fill="none" stroke="#222" stroke-width="2"/><path d="M8 14h6v6H8z" fill="#f25022"/><path d="M15 14h6v6h-6z" fill="#7fba00"/><path d="M8 21h6v6H8z" fill="#00a4ef"/><path d="M15 21h6v6h-6z" fill="#ffb900"/></svg></div>
  <div class="app pl d-flex justify-content-center align-items-center"><svg width="30" height="34" viewBox="0 0 30 34"><rect width="30" height="34" fill="#cfd6d6"/><rect x="6" y="4" width="18" height="26" fill="#f5f5f5"/><text x="15" y="14" font-size="7" text-anchor="middle" font-weight="700" fill="#333" font-family="Liberation Sans">PDF</text><path d="M6 26h18v4H6z" fill="#b060c0"/></svg></div>
  <div class="app d-flex justify-content-center align-items-center"><svg width="32" height="36" viewBox="0 0 32 36"><ellipse cx="16" cy="18" rx="15" ry="18" fill="#d8382c"/><path d="M16 18 1 18A15 18 0 0 0 16 36z" fill="#2a9d50"/><path d="M16 9A15 18 0 0 1 31 18c0 9-6 18-15 18z" fill="#333"/><ellipse cx="16" cy="18" rx="8" ry="9" fill="#fff"/><ellipse cx="16" cy="18" rx="5.500" ry="6.500" fill="#3b7ddd"/></svg></div>
  <div class="app pl d-flex justify-content-center align-items-center"><svg width="30" height="36" viewBox="0 0 30 36"><path d="M29 0C14 5 4 20 0 34c6 1 12 1 29 0C25 22 24 10 29 0z" fill="#1769d2"/><path d="M0 34c6 1 12 1 29 0v2H0z" fill="#8fb7e8"/></svg></div>
  <div class="app pl d-flex justify-content-center align-items-center"><svg width="28" height="36" viewBox="0 0 28 36"><path d="M4 1h20v7H4z" fill="#f8eaa0" stroke="#777" stroke-width=".8"/><path d="M7 26h20l-3 9H4z" fill="#c7c4ee" stroke="#777" stroke-width=".8"/><path d="M14 6l12 12-12 12L2 18z" fill="#f7b1b1" stroke="#777" stroke-width=".8"/></svg></div>
  <div class="app zz d-flex justify-content-center align-items-center"><svg width="28" height="36" viewBox="0 0 28 36"><rect width="28" height="36" rx="9" fill="#2d8cff"/><rect x="6" y="12" width="11" height="11" rx="2" fill="#fff"/><path d="M18 16l5-3v10l-5-3z" fill="#fff"/></svg></div>
  <div class="app d-flex justify-content-center align-items-center"><svg width="29" height="36" viewBox="0 0 29 36"><rect width="29" height="36" fill="#27a8e0"/><circle cx="20" cy="8" r="3" fill="#fff"/><path d="M0 30 12 12l17 18v6H0z" fill="#175a96"/><path d="M0 36V28l8-6 14 14z" fill="#0f3f78"/></svg></div>
 </div>
 <div class="tray">
  <svg width="28" height="28" viewBox="0 0 28 28"><circle cx="13" cy="13" r="12" fill="#1a8fd6" stroke="#fff" stroke-width="2"/><text x="13" y="20" font-size="19" font-weight="700" fill="#fff" text-anchor="middle" font-family="Liberation Sans">?</text><circle cx="22" cy="21" r="6" fill="#1a78b8"/><text x="22" y="25" font-size="10" font-weight="700" fill="#fff" text-anchor="middle" font-family="Liberation Sans">i</text></svg>
  <svg width="16" height="9" viewBox="0 0 16 9"><path d="M1 8 8 1l7 7" fill="none" stroke="#222" stroke-width="1.300"/></svg>
  <svg width="21" height="14" viewBox="0 0 21 14"><path d="M4 13.500h13a3.500 3.500 0 0 0 1-6.800A6 6 0 0 0 7 4.500 4.500 4.500 0 0 0 4 13.500z" fill="#bcbcbc" stroke="#333"/></svg>
  <svg width="14" height="21" viewBox="0 0 14 21"><rect x="3" y="0" width="8" height="14" rx="4" fill="#111"/><path d="M1 9v1a6 6 0 0 0 12 0V9M7 16v4M3 20.500h8" fill="none" stroke="#111"/></svg>
  <svg width="20" height="12" viewBox="0 0 20 12"><path d="M.5.500h17v11H.5z" fill="none" stroke="#111"/><path d="M3 3h6v6H3z" fill="#111"/><path d="M18 4h2v4h-2z" fill="#111"/></svg>
  <svg width="19" height="16" viewBox="0 0 19 16"><path d="M1 15A14 14 0 0 1 15 1M5 15A10 10 0 0 1 15 5M9 15a6 6 0 0 1 6-6" fill="none" stroke="#333"/><circle cx="14.500" cy="14" r="1.800" fill="#111"/></svg>
  <svg width="21" height="16" viewBox="0 0 21 16"><path d="M1 5h3l5-4v14l-5-4H1z" fill="none" stroke="#222"/><path d="M12 5a4 4 0 0 1 0 6M15 3a7 7 0 0 1 0 10" fill="none" stroke="#222"/></svg>
  <svg width="20" height="21" viewBox="0 0 20 21"><path d="M5 20 14 2l4 2-8 16c-3 2-6 1-6-2 0-2 3-5 9-6l6-1" fill="none" stroke="#222"/></svg>
  <div class="clock"><div>9:23 PM</div><div>4/13/2020</div></div>
  <div class="notif"><svg width="20" height="19" viewBox="0 0 20 19"><path d="M0 0h20v16H5l-5 3z" fill="#111"/><path d="M4 4h12M4 7.500h12M4 11h12" stroke="#e3e1de"/></svg><div class="nbadge">4</div></div>
 </div>
</div>
</body></html>
